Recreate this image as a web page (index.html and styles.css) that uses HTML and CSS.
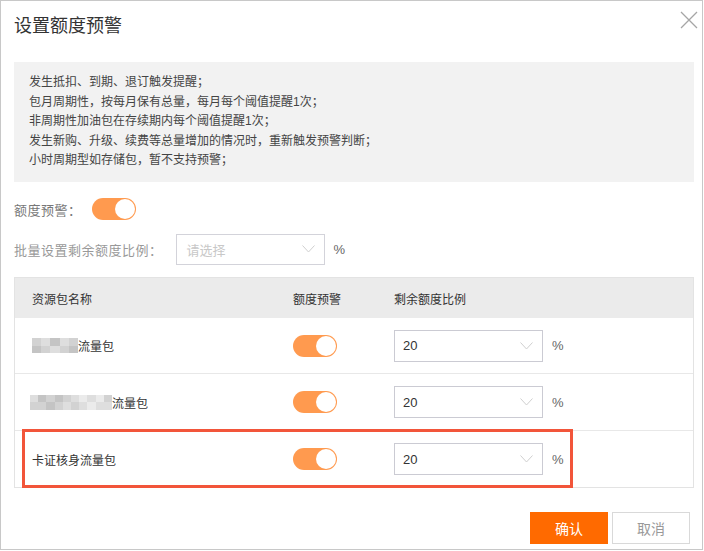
FILE: index.html
```html
<!DOCTYPE html>
<html lang="zh-CN">
<head>
    <meta charset="UTF-8">
    <title>设置额度预警</title>
    <link rel="stylesheet" href="styles.css">
</head>
<body>
    <div class="dialog">
        <div class="dialog-header">
            <h2 class="dialog-title">设置额度预警</h2>
            <button class="close-btn" aria-label="关闭">
                <svg width="18" height="18" viewBox="0 0 18 18"><path d="M1 1L17 17M17 1L1 17" stroke="#a6a6a6" stroke-width="1.3" fill="none"/></svg>
            </button>
        </div>

        <div class="dialog-body">
            <div class="notice">
                <p>发生抵扣、到期、退订触发提醒；</p>
                <p>包月周期性，按每月保有总量，每月每个阈值提醒1次；</p>
                <p>非周期性加油包在存续期内每个阈值提醒1次；</p>
                <p>发生新购、升级、续费等总量增加的情况时，重新触发预警判断；</p>
                <p>小时周期型如存储包，暂不支持预警；</p>
            </div>

            <div class="form-row switch-row">
                <label class="form-label">额度预警：</label>
                <span class="switch on"><span class="switch-knob"></span></span>
            </div>

            <div class="form-row ratio-row">
                <label class="form-label muted">批量设置剩余额度比例：</label>
                <div class="select select-batch">
                    <span class="placeholder">请选择</span>
                    <svg class="chevron" width="13" height="8" viewBox="0 0 13 8"><path d="M0.5 0.5L6.5 7L12.5 0.5" stroke="#cfcfcf" stroke-width="1" fill="none"/></svg>
                </div>
                <span class="unit">%</span>
            </div>

            <div class="table">
                <div class="table-head">
                    <div class="cell">资源包名称</div>
                    <div class="cell">额度预警</div>
                    <div class="cell">剩余额度比例</div>
                </div>

                <div class="table-row">
                    <div class="cell">
                        <span class="mosaic">
                            <i class="m2"></i><i class="m3"></i><i class="m1"></i><i class="m3"></i><i class="m2"></i>
                            <i class="m1"></i><i class="m2"></i><i class="m3"></i><i class="m2"></i><i class="m1"></i>
                        </span>流量包
                    </div>
                    <div class="cell"><span class="switch on"><span class="switch-knob"></span></span></div>
                    <div class="cell">
                        <div class="select"><span>20</span><svg class="chevron" width="13" height="8" viewBox="0 0 13 8"><path d="M0.5 0.5L6.5 7L12.5 0.5" stroke="#cfcfcf" stroke-width="1" fill="none"/></svg></div>
                        <span class="unit">%</span>
                    </div>
                </div>

                <div class="table-row">
                    <div class="cell">
                        <span class="mosaic wide">
                            <i class="m3"></i><i class="m1"></i><i class="m2"></i><i class="m1"></i><i class="m2"></i><i class="m3"></i><i class="m4"></i><i class="m3"></i><i class="m4"></i><i class="m2"></i>
                            <i class="m2"></i><i class="m2"></i><i class="m1"></i><i class="m2"></i><i class="m3"></i><i class="m2"></i><i class="m3"></i><i class="m4"></i><i class="m3"></i><i class="m3"></i>
                        </span>流量包
                    </div>
                    <div class="cell"><span class="switch on"><span class="switch-knob"></span></span></div>
                    <div class="cell">
                        <div class="select"><span>20</span><svg class="chevron" width="13" height="8" viewBox="0 0 13 8"><path d="M0.5 0.5L6.5 7L12.5 0.5" stroke="#cfcfcf" stroke-width="1" fill="none"/></svg></div>
                        <span class="unit">%</span>
                    </div>
                </div>

                <div class="table-row highlighted">
                    <div class="cell">卡证核身流量包</div>
                    <div class="cell"><span class="switch on"><span class="switch-knob"></span></span></div>
                    <div class="cell">
                        <div class="select"><span>20</span><svg class="chevron" width="13" height="8" viewBox="0 0 13 8"><path d="M0.5 0.5L6.5 7L12.5 0.5" stroke="#cfcfcf" stroke-width="1" fill="none"/></svg></div>
                        <span class="unit">%</span>
                    </div>
                    <div class="mark-box"></div>
                </div>
            </div>
        </div>

        <div class="dialog-footer">
            <button class="btn btn-primary">确认</button>
            <button class="btn btn-default">取消</button>
        </div>
    </div>
</body>
</html>
```

FILE: styles.css
```css
body {
    margin: 0;
    font-family: "Liberation Sans", "Noto Sans CJK SC", sans-serif;
    background-color: #fff;
}
.dialog {
    position: relative;
    width: 703px;
    height: 550px;
    box-sizing: border-box;
    border: 1px solid #c8c8c8;
    background-color: #fff;
}
.dialog-header {
    height: 61px;
    box-sizing: border-box;
    padding: 12px 13px 0;
}
.dialog-title {
    margin: 0;
    font-size: 18px;
    font-weight: normal;
    line-height: 26px;
    color: #333;
}
.close-btn {
    position: absolute;
    top: 10px;
    right: 4px;
    padding: 0;
    border: none;
    background: none;
    cursor: pointer;
}
.dialog-body {
    padding: 0 8px 0 13px;
}
.notice {
    height: 120px;
    box-sizing: border-box;
    padding: 11px 15px 0;
    background-color: #f2f2f2;
    font-size: 12px;
    line-height: 19.6px;
    color: #444;
}
.notice p {
    margin: 0;
}
.form-row {
    display: flex;
    align-items: center;
    font-size: 13px;
    color: #777;
}
.form-label {
    letter-spacing: 0.5px;
}
.form-label.muted {
    color: #999;
}
.switch-row {
    height: 22px;
    margin-top: 16px;
}
.switch-row .form-label {
    margin-right: 10px;
}
.ratio-row {
    height: 32px;
    margin-top: 13px;
}
.ratio-row .form-label {
    margin-right: 13px;
}
.switch {
    position: relative;
    display: inline-block;
    width: 44px;
    height: 22px;
    border-radius: 11px;
    background-color: #ccc;
}
.switch.on {
    background-color: #ff9a4f;
}
.switch-knob {
    position: absolute;
    top: 1px;
    left: 1px;
    width: 20px;
    height: 20px;
    border-radius: 50%;
    background-color: #fff;
}
.switch.on .switch-knob {
    left: 23px;
}
.select {
    display: flex;
    align-items: center;
    justify-content: space-between;
    width: 149px;
    height: 32px;
    box-sizing: border-box;
    padding: 0 9px 0 8px;
    border: 1px solid #cbcbd3;
    background-color: #fff;
    font-size: 13px;
    color: #333;
}
.select-batch {
    height: 31px;
    padding-left: 10px;
    border-color: #d3d3da;
}
.placeholder {
    color: #c8c8c8;
}
.chevron {
    display: block;
}
.unit {
    margin-left: 9px;
    font-size: 13px;
    color: #666;
}
.table {
    margin-top: 12px;
    border: 1px solid #e3e3e3;
    font-size: 12px;
    color: #333;
}
.table-head,
.table-row {
    display: grid;
    grid-template-columns: 262px 101px 1fr;
}
.table-head {
    height: 40px;
    background-color: #ebebeb;
}
.table-row {
    position: relative;
    height: 57px;
    box-sizing: border-box;
    border-top: 1px solid #e8e8e8;
}
.table-head + .table-row {
    height: 55px;
    border-top: none;
}
.cell {
    display: flex;
    align-items: center;
    padding-left: 16px;
}
.table-head .cell:first-child,
.table-row .cell:first-child {
    padding-left: 17px;
}
.mosaic {
    display: inline-flex;
    flex-wrap: wrap;
    width: 46px;
    height: 15px;
}
.mosaic.wide {
    width: 82px;
    margin-left: -2px;
}
.mosaic i {
    display: block;
    width: 9.2px;
    height: 7.5px;
}
.mosaic.wide i {
    width: 8.2px;
}
.m1 { background-color: #c4c4c4; }
.m2 { background-color: #d2d2d2; }
.m3 { background-color: #dedede; }
.m4 { background-color: #ebebeb; }
.mark-box {
    position: absolute;
    top: -2px;
    left: 7px;
    width: 551px;
    height: 59px;
    box-sizing: border-box;
    border: 3px solid #f2553a;
    pointer-events: none;
}
.dialog-footer {
    display: flex;
    justify-content: flex-end;
    gap: 4px;
    padding: 24px 12px 0 0;
}
.btn {
    width: 78px;
    height: 32px;
    font-family: inherit;
    font-size: 14px;
    cursor: pointer;
}
.btn-primary {
    border: none;
    background-color: #ff6a00;
    color: #fff;
}
.btn-default {
    border: 1px solid #d9d9d9;
    background-color: #fff;
    color: #999;
}
```
